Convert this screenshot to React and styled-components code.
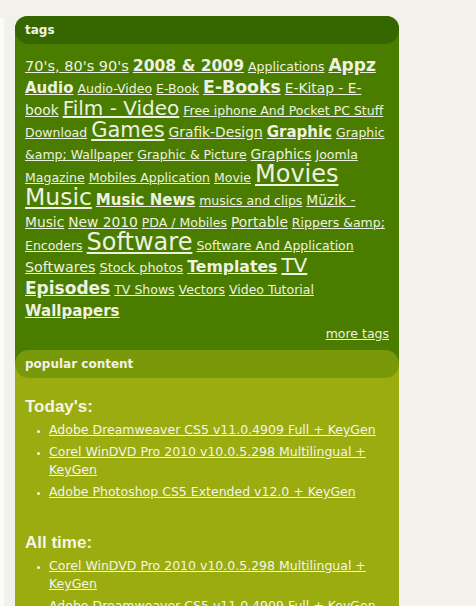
import React from "react";
import styled, { createGlobalStyle } from "styled-components";

const Global = createGlobalStyle`
  html, body {
    margin: 0;
    padding: 0;
    background: #f2f1eb;
  }
  body {
    font-family: "DejaVu Sans", Verdana, sans-serif;
  }
`;

const Page = styled.div`
  display: flex;
  align-items: flex-start;
  height: 606px;
  overflow: hidden;
`;

const LeftStrip = styled.div`
  width: 4px;
  height: 590px;
  margin-top: 18px;
  background: #fbfbf8;
  border-radius: 0 4px 0 0;
`;

const Sidebar = styled.div`
  width: 384px;
  margin: 16px 0 0 11px;
`;

const Block = styled.div`
  background: ${(p) => p.bg};
  border-radius: ${(p) => (p.first ? "12px 12px 0 0" : "0")};
  ${(p) => p.above && `background: linear-gradient(${p.above} 14px, ${p.bg} 14px);`}
`;

const Header = styled.div`
  height: 28px;
  line-height: 28px;
  padding-left: 10px;
  border-radius: 14px;
  background: ${(p) => p.bg};
  color: #f2f2e6;
  font-size: 12px;
  font-weight: bold;
`;

const TagBody = styled.div`
  padding: 12px 6px 5px 10px;
  font-size: 12.5px;
  line-height: 22px;
  color: #eef2e0;
`;

const Tag = styled.a`
  color: #eef2e0;
  text-decoration: underline;
  font-size: ${(p) => p.size}px;
  font-weight: ${(p) => (p.bold ? "bold" : "normal")};
  line-height: 16px;
`;

const More = styled.div`
  text-align: right;
  font-size: 12.5px;
  margin: 0 4px 0 0;
  a {
    color: #eef2e0;
  }
`;

const PopBody = styled.div`
  padding: 17px 10px 4px 10px;
  color: #f5f5e8;
`;

const Heading = styled.h3`
  margin: 0 0 2px 0;
  font-family: "Liberation Sans", Arial, sans-serif;
  font-size: 17px;
  font-weight: bold;
  color: #f5f5e3;
  line-height: 24px;
`;

const List = styled.ul`
  margin: 0 0 30px 0;
  padding-left: 24px;
  list-style: disc;
  font-size: 12.5px;
  line-height: 18px;
  li {
    margin-bottom: 4px;
  }
  li::marker {
    font-size: 9px;
  }
  a {
    color: #f5f5e8;
  }
`;

const S = 12.5;
const M = 13.8;

const tags = [
  ["70's, 80's 90's", 14.5],
  ["2008 & 2009", 15.6, true],
  ["Applications", S],
  ["Appz", 17, true],
  ["Audio", 15, true],
  ["Audio-Video", S],
  ["E-Book", S],
  ["E-Books", 17.3, true],
  ["E-Kitap - E-book", M],
  ["Film - Video", 20],
  ["Free iphone And Pocket PC Stuff", S],
  ["Download", S],
  ["Games", 21],
  ["Grafik-Design", M],
  ["Graphic", 15, true],
  ["Graphic &amp; Wallpaper", S],
  ["Graphic & Picture", S],
  ["Graphics", M],
  ["Joomla", S],
  ["Magazine", S],
  ["Mobiles Application", S],
  ["Movie", S],
  ["Movies", 24],
  ["Music", 23.5],
  ["Music News", 15, true],
  ["musics and clips", S],
  ["Müzik - Music", M],
  ["New 2010", M],
  ["PDA / Mobiles", S],
  ["Portable", M],
  ["Rippers &amp; Encoders", S],
  ["Software", 24],
  ["Software And Application", S],
  ["Softwares", 14.3],
  ["Stock photos", 12.9],
  ["Templates", 15.7, true],
  ["TV", 20],
  ["Episodes", 17, true],
  ["TV Shows", S],
  ["Vectors", S],
  ["Video Tutorial", S],
  ["Wallpapers", 15, true],
];

function App() {
  return (
    <>
      <Global />
      <Page>
        <LeftStrip />
        <Sidebar>
          <Block bg="#4a7c00" first>
            <Header bg="#356600">tags</Header>
            <TagBody>
              {tags.map(([name, size, bold], i) => (
                <React.Fragment key={i}>
                  <Tag href="#" size={size} bold={bold}>{name}</Tag>{" "}
                </React.Fragment>
              ))}
              <More><a href="#">more tags</a></More>
            </TagBody>
          </Block>
          <Block bg="#9bac10" above="#4a7c00">
            <Header bg="#7a990a">popular content</Header>
            <PopBody>
              <Heading>Today's:</Heading>
              <List>
                <li><a href="#">Adobe Dreamweaver CS5 v11.0.4909 Full + KeyGen</a></li>
                <li><a href="#">Corel WinDVD Pro 2010 v10.0.5.298 Multilingual + KeyGen</a></li>
                <li><a href="#">Adobe Photoshop CS5 Extended v12.0 + KeyGen</a></li>
              </List>
              <Heading>All time:</Heading>
              <List>
                <li><a href="#">Corel WinDVD Pro 2010 v10.0.5.298 Multilingual + KeyGen</a></li>
                <li><a href="#">Adobe Dreamweaver CS5 v11.0.4909 Full + KeyGen</a></li>
                <li><a href="#">Adobe Photoshop CS5 Extended v12.0 + KeyGen</a></li>
              </List>
            </PopBody>
          </Block>
        </Sidebar>
      </Page>
    </>
  );
}

export default App;
